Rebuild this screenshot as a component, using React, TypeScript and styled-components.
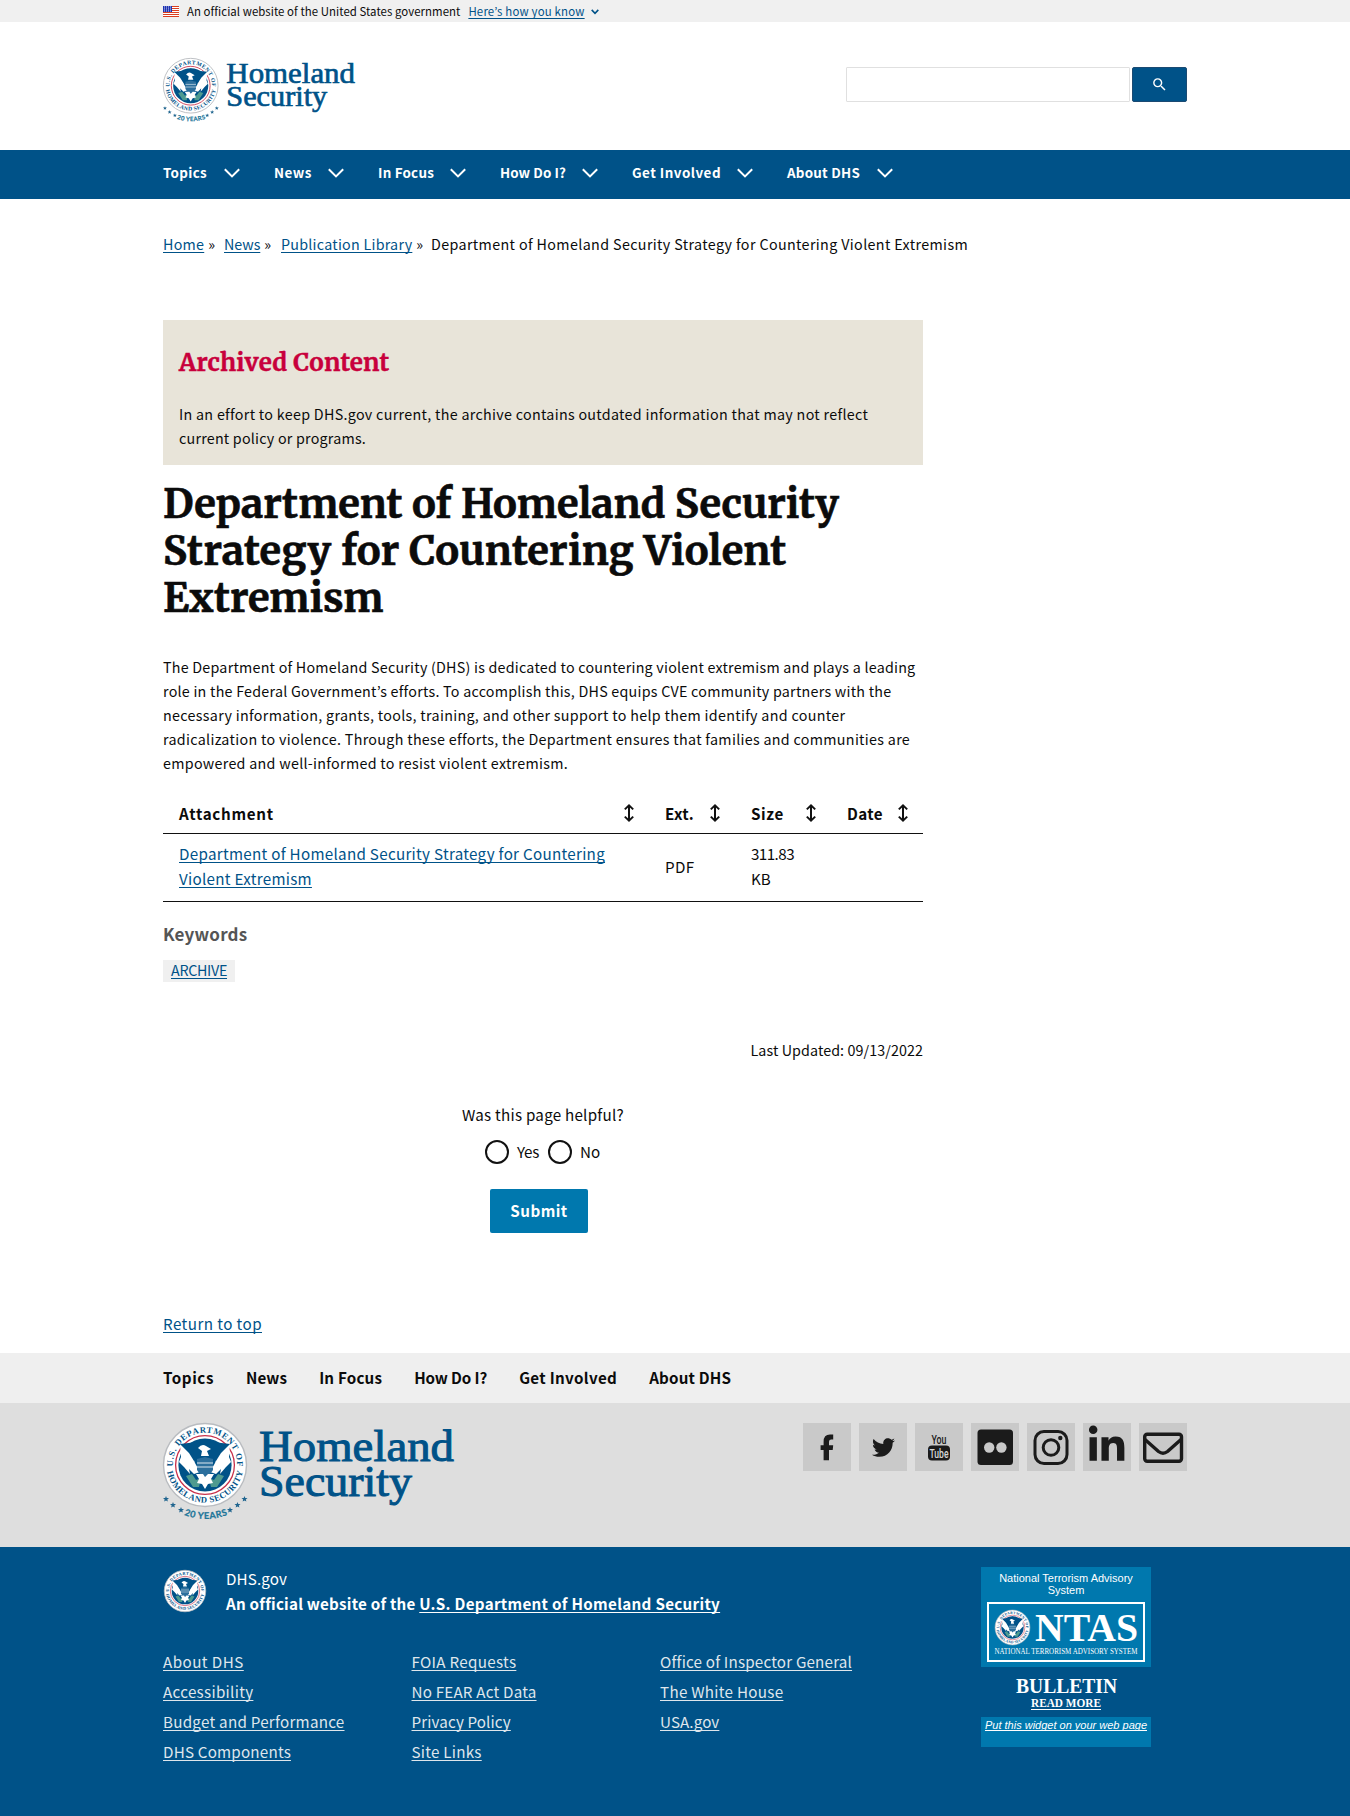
import React from "react";
import styled, { createGlobalStyle, css } from "styled-components";
import { FaTwitter, FaLinkedinIn } from "react-icons/fa";
import { MdSearch } from "react-icons/md";

const sans = `"Noto Sans CJK KR", "Noto Sans", sans-serif`;
const heading = `"Merriweather", "DejaVu Serif Condensed", "DejaVu Serif", serif`;
const navy = "#005288";
const teal = "#0078ae";

const GlobalStyle = createGlobalStyle`
  *, *::before, *::after { box-sizing: border-box; }
  body { margin: 0; background: #fff; color: #0b0b0b; font-family: ${sans}; font-size: 15.2px; line-height: 25px; }
  ul { margin: 0; padding: 0; list-style: none; }
  h1, h2, h3, p { margin: 0; }
`;

const Container = styled.div`
  width: 1024px;
  margin: 0 auto;
`;

const Label = styled.span<{ $ls?: number }>`
  letter-spacing: ${(p) => p.$ls ?? 0.25}px;
  white-space: nowrap;
`;

const link = css`
  color: ${navy};
  text-decoration: underline;
  text-decoration-thickness: 1px;
  text-underline-offset: 2px;
  text-decoration-skip-ink: none;
`;

const Link = styled.a<{ $ls?: number }>`
  ${link}
  letter-spacing: ${(p) => p.$ls ?? 0.25}px;
`;

/* ---------- Government banner ---------- */
const Banner = styled.div`
  height: 22px;
  background: #f0f0f0;
  font-size: 11.4px;
  line-height: 22px;
`;
const BannerRow = styled(Container)`
  display: flex;
  align-items: center;
  height: 22px;
`;
const FlagIcon = styled.svg`
  width: 16px;
  height: 11px;
  margin-right: 8px;
`;
const BannerLink = styled(Link)`
  margin-left: 8px;
`;
const BannerChevron = styled.svg`
  width: 8px;
  height: 6px;
  margin: 2px 0 0 6px;
`;

/* ---------- Header ---------- */
const HeaderRow = styled(Container)`
  display: flex;
  justify-content: space-between;
  height: 128px;
`;
const LogoSvg = styled.svg<{ $w: number; $top: number }>`
  display: block;
  width: ${(p) => p.$w}px;
  height: ${(p) => p.$w / 3}px;
  margin-top: ${(p) => p.$top}px;
  overflow: visible;
`;
const SearchForm = styled.form`
  display: flex;
  gap: 2px;
  margin: 45px 0 0;
  height: 35px;
`;
const SearchInput = styled.input`
  width: 284px;
  height: 35px;
  border: 1px solid #e0e0e0;
  border-radius: 1px;
  background: #fff;
  outline: none;
`;
const SearchButton = styled.button`
  display: flex;
  align-items: center;
  justify-content: center;
  width: 55px;
  height: 35px;
  padding: 0;
  border: 1px solid #1b4a72;
  border-radius: 2px;
  background: ${navy};
  color: #fff;
`;

const Nav = styled.nav`
  height: 49px;
  background: ${navy};
`;
const NavRow = styled(Container)`
  display: flex;
`;
const NavItem = styled.button<{ $w: number }>`
  display: flex;
  align-items: center;
  justify-content: space-between;
  width: ${(p) => p.$w}px;
  height: 44px;
  margin-right: 34px;
  padding: 0;
  border: 0;
  background: none;
  color: #fff;
  font: bold 13.4px/20px ${sans};
`;
const NavChevron = styled.svg`
  width: 16px;
  height: 10px;
  margin-top: 1px;
`;

/* ---------- Main ---------- */
const Breadcrumbs = styled.div`
  display: flex;
  padding-top: 33px;
  font-size: 14.3px;
  line-height: 24px;
`;
const Crumb = styled.span<{ $w?: number }>`
  width: ${(p) => (p.$w ? `${p.$w}px` : "auto")};
  white-space: nowrap;
`;
const Sep = styled.span`
  padding-left: 4px;
`;
const Column = styled.main`
  width: 760px;
`;
const Alert = styled.section`
  height: 145px;
  margin-top: 64px;
  padding: 28px 16px 0;
  background: #e8e4d9;
`;
const AlertTitle = styled.h3`
  color: #c8003c;
  font: bold 24.2px/30px ${heading};
  letter-spacing: 0.25px;
  -webkit-text-stroke: 0.4px currentColor;
`;
const Copy = styled.p<{ $top: number }>`
  margin-top: ${(p) => p.$top}px;
  font-size: 14.3px;
  line-height: 24px;
`;
const Title = styled.h1`
  margin-top: 16px;
  font: bold 39.9px/47px ${heading};
  -webkit-text-stroke: 0.6px currentColor;
`;
const Line = styled.span<{ $ls?: number }>`
  display: block;
  white-space: nowrap;
  letter-spacing: ${(p) => p.$ls ?? 0}px;
`;

const TableRow = styled.div<{ $head?: boolean }>`
  display: grid;
  grid-template-columns: 486px 86px 96px 92px;
  align-items: center;
  height: ${(p) => (p.$head ? 41 : 68)}px;
  margin-top: ${(p) => (p.$head ? 18 : 0)}px;
  padding-bottom: ${(p) => (p.$head ? 0 : 3)}px;
  border-bottom: 1px solid #111;
  font-weight: ${(p) => (p.$head ? 700 : 400)};
`;
const Cell = styled.div`
  display: flex;
  align-items: center;
  justify-content: space-between;
  padding: 0 14px 0 16px;
`;
const SortIcon = styled.svg`
  width: 12px;
  height: 18px;
`;

const Keywords = styled.h2`
  margin-top: 19px;
  color: #555;
  font: bold 17px/26px ${sans};
`;
const Tag = styled.div`
  width: 72px;
  height: 22px;
  margin-top: 13px;
  padding-left: 8px;
  background: #f0f0f0;
  font-size: 14.3px;
  line-height: 20px;
`;
const Updated = styled.div`
  margin-top: 56px;
  text-align: right;
  font-size: 14.3px;
  line-height: 24px;
`;
const Survey = styled.form`
  display: flex;
  flex-direction: column;
  align-items: center;
  margin-top: 40px;
`;
const Options = styled.div`
  display: flex;
  align-items: center;
  gap: 8px;
  margin-top: 12px;
  height: 25px;
`;
const Option = styled.label<{ $w: number }>`
  display: flex;
  align-items: center;
  gap: 8px;
  width: ${(p) => p.$w}px;
`;
const Radio = styled.input`
  appearance: none;
  flex: none;
  width: 24px;
  height: 24px;
  margin: 0;
  border: 2px solid #111;
  border-radius: 50%;
`;
const Submit = styled.button`
  width: 98px;
  height: 44px;
  margin: 25px 8px 0 0;
  padding: 0 0 2px;
  border: 0;
  border-radius: 2px;
  background: ${teal};
  color: #fff;
  font: bold 15.2px/42px ${sans};
`;
const ReturnRow = styled(Container)`
  margin-top: 78px;
  height: 42px;
`;

/* ---------- Footer ---------- */
const FooterNav = styled.nav`
  height: 50px;
  background: #efefef;
  font-weight: 700;
  line-height: 48px;
`;
const FooterNavRow = styled(Container)`
  display: flex;
  gap: 32px;
`;
const FooterBrand = styled.div`
  height: 144px;
  background: #dedede;
`;
const BrandRow = styled(Container)`
  display: flex;
  justify-content: space-between;
`;
const Social = styled.ul`
  display: flex;
  gap: 8px;
  margin-top: 20px;
`;
const Tile = styled.li`
  display: flex;
  align-items: center;
  justify-content: center;
  width: 48px;
  height: 48px;
  background: #c9c9c9;
  color: #1b1b1b;

  svg { display: block; overflow: visible; }
`;
const Identifier = styled.footer`
  height: 269px;
  background: ${navy};
  color: #fff;
`;
const IdRow = styled(Container)`
  display: flex;
  justify-content: space-between;
`;
const Masthead = styled.div`
  display: flex;
  gap: 19px;
  margin-top: 19px;
`;
const SmallSeal = styled.svg`
  flex: none;
  width: 44px;
  height: 44px;
  margin-top: 3px;
`;
const Strong = styled.div`
  font-weight: 700;
  white-space: nowrap;
  a { color: #fff; }
`;
const LinkGrid = styled.div`
  display: grid;
  grid-template-columns: 248.5px 248.5px 248px;
  margin-top: 30px;
  line-height: 30px;
  white-space: nowrap;
  a { color: #dfe6ec; }
`;
const Widget = styled.aside`
  width: 170px;
  height: 180px;
  margin: 20px 36px 0 0;
  font: 11px/12px "Liberation Sans", Arial, sans-serif;
  text-align: center;
`;
const WidgetTop = styled.div`
  height: 100px;
  padding: 5px 6px 0;
  background: ${teal};
`;
const WidgetTitle = styled.div`
  padding: 0 12px;
`;
const NtasBox = styled.div`
  height: 60px;
  margin-top: 6px;
  border: 2px solid #fff;
`;
const Bulletin = styled.svg`
  display: block;
  width: 170px;
  height: 50px;
`;
const WidgetFoot = styled.div`
  height: 30px;
  padding-top: 2px;
  background: ${teal};
  font-style: italic;
  white-space: nowrap;
  a { ${link} color: #fff; text-underline-offset: 1px; }
`;

/* Department seal centred on the origin, radius 42 */
const Seal = ({ id }: { id: string }) => (
  <g>
    <circle r="41.5" fill="#fff" stroke="#b9bcc0" strokeWidth="1.4" />
    <circle r="29.4" fill="#fff" stroke="#c8304a" strokeWidth="1.3" />
    <circle r="26.6" fill={navy} />
    <path d="M-19 11 L-13 9 L-9 15 L-4 13 L-6 22 L-12 22 Z M19 11 L13 9 L9 15 L4 13 L6 22 L12 22 Z" fill="#4e9a8f" />
    <path d="M-25 -21 L-14 -13 L-10 -2 L-5 7 L-11 9 L-16 4 L-15 9 L-21 2 L-26 -3 L-24 -8 Z M25 -21 L14 -13 L10 -2 L5 7 L11 9 L16 4 L15 9 L21 2 L26 -3 L24 -8 Z" fill="#fff" />
    <path d="M-25 -21 L-8 -23 L0 -26 L8 -23 L25 -21 L16 -12 L11 -4 L7 -10 L0 -5 L-7 -10 L-11 -4 L-16 -12 Z" fill={navy} />
    <path d="M-7 -17 Q-3 -22 1 -19 L6 -16 L2 -14 L4 -9 L-4 -9 L-3 -14 Z" fill="#fff" />
    <path d="M-8 -6 L0 -8 L8 -6 L8 5 Q5 10 0 12 Q-5 10 -8 5 Z" fill="#2c6f9d" />
    <path d="M-8 -2 H8 M-8 2 H8" stroke="#dce8ef" strokeWidth="1" />
    <path d="M-9 9 L-2 9 L0 12 L3 9 L9 9 L6 14 L8 18 L3 19 L0 24 L-3 19 L-8 18 L-6 14 Z" fill="#fff" />
    <path id={`${id}-t`} d="M-29.4 13 A32.2 32.2 0 1 1 29.4 13" fill="none" />
    <path id={`${id}-b`} d="M-38.4 3 A38.6 38.6 0 0 0 38.4 3" fill="none" />
    <g fill={navy} fontFamily="Liberation Serif, serif" fontWeight="700" fontSize="8.6">
      <text textAnchor="middle">
        <textPath href={`#${id}-t`} startOffset="50%" textLength="104">U.S. DEPARTMENT OF</textPath>
      </text>
      <text textAnchor="middle">
        <textPath href={`#${id}-b`} startOffset="50%" textLength="106">HOMELAND SECURITY</textPath>
      </text>
    </g>
  </g>
);

const star = "M0 -3 L.8 -1 L3 -.9 L1.3 .5 L1.9 2.6 L0 1.4 L-1.9 2.6 L-1.3 .5 L-3 -.9 L-.8 -1 Z";
const Logo = ({ id, width, top }: { id: string; width: number; top: number }) => (
  <LogoSvg $w={width} $top={top} viewBox="0 0 291 97">
    <g transform="translate(42 42)">
      <Seal id={id} />
    </g>
    {[[3, 76], [10, 82], [18, 87], [67, 87], [74.5, 82], [81.5, 76]].map(([x, y]) => (
      <path key={x} d={star} transform={`translate(${x} ${y})`} fill="#20658f" />
    ))}
    <path id={`${id}-y`} d="M20 91.5 Q42 100.5 66 91.5" fill="none" />
    <text fill="#1c7599" stroke="#1c7599" strokeWidth=".25" textAnchor="middle" fontFamily="Lato, sans-serif" fontWeight="700" fontSize="9.2" letterSpacing=".5">
      <textPath href={`#${id}-y`} startOffset="50%">20 YEARS</textPath>
    </text>
    <g fill={navy} stroke={navy} strokeWidth="1" fontFamily="Liberation Serif, serif" fontSize="44">
      <text x="96" y="38" textLength="195" lengthAdjust="spacingAndGlyphs">Homeland</text>
      <text x="96" y="73" textLength="153" lengthAdjust="spacingAndGlyphs">Security</text>
    </g>
  </LogoSvg>
);

const Sort = () => (
  <SortIcon viewBox="0 0 12 18" fill="none" stroke="#111" strokeWidth="2">
    <path d="M6 2 V16 M1.8 5.4 L6 1.4 L10.2 5.4 M1.8 12.6 L6 16.6 L10.2 12.6" />
  </SortIcon>
);

const navItems: [string, number, number][] = [
  ["Topics", 77, 0.33],
  ["News", 70, 0.5],
  ["In Focus", 88, 0.22],
  ["How Do I?", 98, 0.08],
  ["Get Involved", 121, 0.49],
  ["About DHS", 106, 0.24],
];
const footerNav: [string, number][] = [
  ["Topics", 0.55],
  ["News", 0.1],
  ["In Focus", 0.19],
  ["How Do I?", -0.12],
  ["Get Involved", 0.31],
  ["About DHS", 0.18],
];
const columns: [string, number][][] = [
  [["About DHS", 0.45], ["Accessibility", 0.3], ["Budget and Performance", 0.25], ["DHS Components", 0.2]],
  [["FOIA Requests", 0.3], ["No FEAR Act Data", 0.2], ["Privacy Policy", 0.12], ["Site Links", 0.25]],
  [["Office of Inspector General", 0.18], ["The White House", 0.28], ["USA.gov", 0.1]],
];
const body: [string, number][] = [
  ["The Department of Homeland Security (DHS) is dedicated to countering violent extremism and plays a leading", 0.228],
  ["role in the Federal Government’s efforts. To accomplish this, DHS equips CVE community partners with the", 0.242],
  ["necessary information, grants, tools, training, and other support to help them identify and counter", 0.315],
  ["radicalization to violence. Through these efforts, the Department ensures that families and communities are", 0.308],
  ["empowered and well-informed to resist violent extremism.", 0.29],
];

export default function App() {
  return (
    <>
      <GlobalStyle />
      <Banner>
        <BannerRow>
          <FlagIcon viewBox="0 0 16 11">
            <rect width="16" height="11" fill="#fff" />
            {[0, 2, 4, 6, 8, 10].map((y) => (
              <rect key={y} y={y} width="16" height="1" fill="#db3e1f" />
            ))}
            <rect width="9" height="6" fill="#1e33b1" />
            {[1, 3, 5].map((y) =>
              [1, 3, 5, 7].map((x) => <rect key={`${x}-${y}`} x={x} y={y - 0.5} width=".9" height=".9" fill="#fff" />)
            )}
          </FlagIcon>
          <Label $ls={0.06}>An official website of the United States government</Label>
          <BannerLink $ls={0.2} href="#">Here’s how you know</BannerLink>
          <BannerChevron viewBox="0 0 8 6" fill="none" stroke={navy} strokeWidth="1.6">
            <path d="M.7 .9 L4 4.3 L7.3 .9" />
          </BannerChevron>
        </BannerRow>
      </Banner>

      <HeaderRow as="header">
        <Logo id="hd" width={192} top={36} />
        <SearchForm>
          <SearchInput aria-label="Search" />
          <SearchButton type="button" aria-label="Search">
            <MdSearch size={17} />
          </SearchButton>
        </SearchForm>
      </HeaderRow>

      <Nav>
        <NavRow>
          {navItems.map(([t, w, ls]) => (
            <NavItem key={t} $w={w}>
              <Label $ls={ls}>{t}</Label>
              <NavChevron viewBox="0 0 16 10" fill="none" stroke="#fff" strokeWidth="2">
                <path d="M.8 1.2 L8 8.4 L15.2 1.2" />
              </NavChevron>
            </NavItem>
          ))}
        </NavRow>
      </Nav>

      <Container>
        <Breadcrumbs>
          <Crumb $w={61}><Link $ls={0.25} href="#">Home</Link><Sep>»</Sep></Crumb>
          <Crumb $w={57}><Link $ls={-0.05} href="#">News</Link><Sep>»</Sep></Crumb>
          <Crumb $w={150}><Link $ls={0.25} href="#">Publication Library</Link><Sep>»</Sep></Crumb>
          <Label $ls={0.37}>Department of Homeland Security Strategy for Countering Violent Extremism</Label>
        </Breadcrumbs>

        <Column>
          <Alert>
            <AlertTitle>Archived Content</AlertTitle>
            <Copy $top={24}>
              <Line $ls={0.302}>In an effort to keep DHS.gov current, the archive contains outdated information that may not reflect</Line>
              <Line $ls={0.214}>current policy or programs.</Line>
            </Copy>
          </Alert>

          <Title>
            <Line>Department of Homeland Security</Line>
            <Line $ls={0.27}>Strategy for Countering Violent</Line>
            <Line>Extremism</Line>
          </Title>

          <Copy $top={33}>
            {body.map(([t, ls]) => (
              <Line key={t} $ls={ls}>{t}</Line>
            ))}
          </Copy>

          <TableRow $head>
            <Cell><Label $ls={0.7}>Attachment</Label><Sort /></Cell>
            <Cell><Label $ls={0.27}>Ext.</Label><Sort /></Cell>
            <Cell><Label $ls={0.6}>Size</Label><Sort /></Cell>
            <Cell><Label $ls={0.38}>Date</Label><Sort /></Cell>
          </TableRow>
          <TableRow>
            <Cell>
              <Link $ls={0.285} href="#">Department of Homeland Security Strategy for Countering Violent Extremism</Link>
            </Cell>
            <Cell><Label $ls={0.3}>PDF</Label></Cell>
            <Cell><div><Line $ls={-0.56}>311.83</Line><Line $ls={-0.15}>KB</Line></div></Cell>
            <Cell />
          </TableRow>

          <Keywords><Label $ls={0.2}>Keywords</Label></Keywords>
          <Tag><Link $ls={-0.3} href="#">ARCHIVE</Link></Tag>
          <Updated><Label $ls={0.084}>Last Updated: 09/13/2022</Label></Updated>

          <Survey>
            <Label $ls={0.24}>Was this page helpful?</Label>
            <Options>
              <Option $w={55}><Radio type="radio" name="helpful" /><Label $ls={-0.3}>Yes</Label></Option>
              <Option $w={53}><Radio type="radio" name="helpful" /><Label $ls={-0.1}>No</Label></Option>
            </Options>
            <Submit type="button"><Label $ls={0.48}>Submit</Label></Submit>
          </Survey>
        </Column>
      </Container>

      <ReturnRow><Link $ls={0.427} href="#">Return to top</Link></ReturnRow>

      <FooterNav>
        <FooterNavRow>
          {footerNav.map(([t, ls]) => (
            <Label key={t} $ls={ls}>{t}</Label>
          ))}
        </FooterNavRow>
      </FooterNav>

      <FooterBrand>
        <BrandRow>
          <Logo id="ft" width={291} top={20} />
          <Social>
            <Tile>
              <svg width="48" height="48" viewBox="0 0 48 48" fill="currentColor">
                <path d="M20.6 37.3 V27 H17.6 V22.2 H20.6 V18.8 Q20.6 11.6 27 11.6 H30.2 V16.6 H28.2 Q26 16.6 26 18.8 V22.2 H30.2 L29.7 27 H26 V37.3 Z" />
              </svg>
            </Tile>
            <Tile><FaTwitter size={23} /></Tile>
            <Tile>
              <svg width="48" height="48" viewBox="0 0 48 48" fontFamily="Roboto, sans-serif" fontWeight="500">
                <text x="16.5" y="21" fontSize="13.5" textLength="15" lengthAdjust="spacingAndGlyphs" fill="#1b1b1b">You</text>
                <rect x="13" y="22.5" width="22" height="15" rx="4" fill="#1b1b1b" />
                <text x="14.5" y="34.7" fontSize="12.5" textLength="19" lengthAdjust="spacingAndGlyphs" fill="#d8d8d8">Tube</text>
              </svg>
            </Tile>
            <Tile>
              <svg width="48" height="48" viewBox="0 0 48 48">
                <rect x="6.5" y="6.5" width="35.5" height="35.5" rx="3.5" fill="#1b1b1b" />
                <circle cx="18.2" cy="24.5" r="5.2" fill="#c9c9c9" />
                <circle cx="30.4" cy="24.5" r="5.2" fill="#c9c9c9" />
              </svg>
            </Tile>
            <Tile>
              <svg width="48" height="48" viewBox="0 0 48 48" fill="none" stroke="#1b1b1b" strokeWidth="3">
                <rect x="8" y="8.5" width="32" height="32" rx="9" />
                <circle cx="24" cy="24.5" r="7.8" />
                <circle cx="33.3" cy="15" r="2.2" fill="#1b1b1b" stroke="none" />
              </svg>
            </Tile>
            <Tile>
              <svg width="48" height="48" viewBox="0 0 48 48">
                <FaLinkedinIn x="3.4" y="2.4" size={40.5} />
              </svg>
            </Tile>
            <Tile>
              <svg width="48" height="48" viewBox="0 0 48 48" fill="none" stroke="#1b1b1b" strokeWidth="3.4" strokeLinejoin="round">
                <rect x="5.7" y="11.2" width="36.8" height="27" rx="2.5" />
                <path d="M6 16.5 L19.5 28.5 Q24 32 28.5 28.5 L42 16.5" />
              </svg>
            </Tile>
          </Social>
        </BrandRow>
      </FooterBrand>

      <Identifier>
        <IdRow>
          <div>
            <Masthead>
              <SmallSeal viewBox="-44 -44 88 88"><Seal id="sm" /></SmallSeal>
              <div>
                <Label $ls={0.116}>DHS.gov</Label>
                <Strong>
                  <Label $ls={0.23}>An official website of the </Label>
                  <Link $ls={0.3} href="#">U.S. Department of Homeland Security</Link>
                </Strong>
              </div>
            </Masthead>
            <LinkGrid>
              {columns.map((col, i) => (
                <ul key={i}>
                  {col.map(([t, ls]) => (
                    <li key={t}><Link $ls={ls} href="#">{t}</Link></li>
                  ))}
                </ul>
              ))}
            </LinkGrid>
          </div>
          <Widget>
            <WidgetTop>
              <WidgetTitle>National Terrorism Advisory System</WidgetTitle>
              <NtasBox>
                <svg width="154" height="56" viewBox="0 0 154 56" fontFamily="Liberation Serif, serif" fill="#fff">
                  <g transform="translate(23.5 23.5) scale(.42)"><Seal id="nt" /></g>
                  <text x="46" y="37" fontSize="41" fontWeight="700" textLength="103" lengthAdjust="spacingAndGlyphs">NTAS</text>
                  <text x="5.5" y="50" fontSize="7.5" textLength="143" lengthAdjust="spacingAndGlyphs">NATIONAL TERRORISM ADVISORY SYSTEM</text>
                </svg>
              </NtasBox>
            </WidgetTop>
            <Bulletin viewBox="0 0 170 50" fontFamily="Liberation Serif, serif" fontWeight="700" fill="#fff">
              <text x="35" y="25.5" fontSize="22" textLength="101" lengthAdjust="spacingAndGlyphs">BULLETIN</text>
              <text x="50" y="40" fontSize="13" textLength="70" lengthAdjust="spacingAndGlyphs">READ MORE</text>
              <rect x="50" y="42" width="70" height="1" />
            </Bulletin>
            <WidgetFoot><a href="#">Put this widget on your web page</a></WidgetFoot>
          </Widget>
        </IdRow>
      </Identifier>
    </>
  );
}
